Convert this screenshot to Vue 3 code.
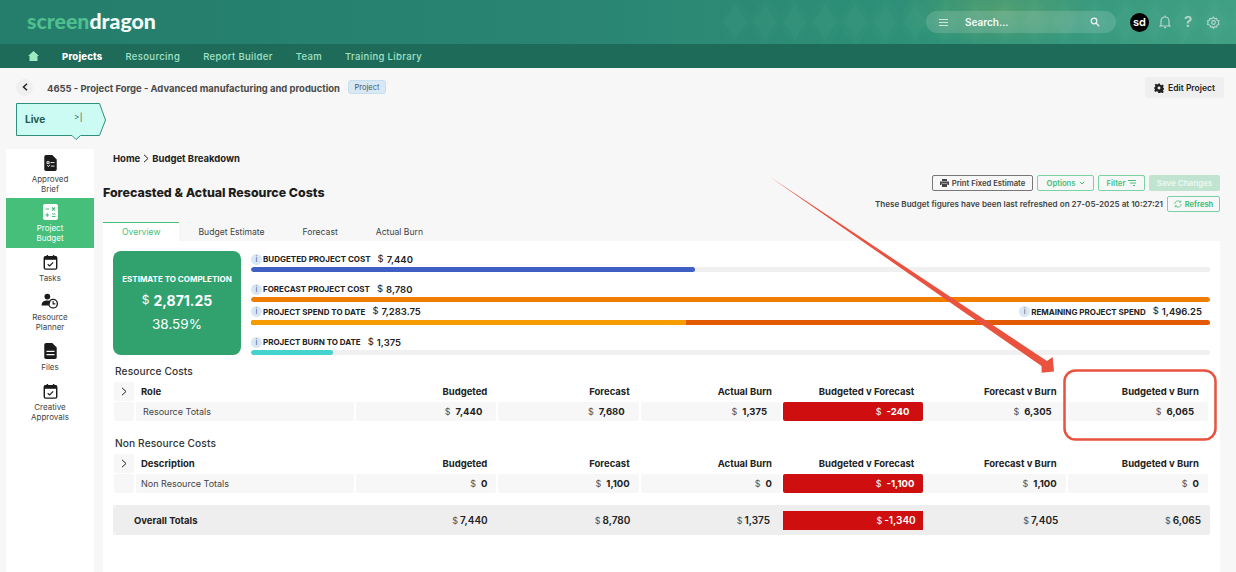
<script setup>
const sideItems = [
  { key: 'brief', lines: ['Approved', 'Brief'] },
  { key: 'calc', lines: ['Project', 'Budget'], active: true },
  { key: 'cal', lines: ['Tasks'] },
  { key: 'planner', lines: ['Resource', 'Planner'] },
  { key: 'file', lines: ['Files'] },
  { key: 'cal', lines: ['Creative', 'Approvals'] }
]
const navItems = ['Projects', 'Resourcing', 'Report Builder', 'Team', 'Training Library']
const tabs = ['Overview', 'Budget Estimate', 'Forecast', 'Actual Burn']
const heads = ['Budgeted', 'Forecast', 'Actual Burn', 'Budgeted v Forecast', 'Forecast v Burn', 'Budgeted v Burn']
const resourceVals = ['7,440', '7,680', '1,375', '-240', '6,305', '6,065']
const nonResourceVals = ['0', '1,100', '0', '-1,100', '1,100', '0']
const overallVals = ['7,440', '8,780', '1,375', '-1,340', '7,405', '6,065']
const sections = [
  { title: 'Resource Costs', first: 'Role', name: 'Resource Totals', vals: resourceVals, cls: 'loose' },
  { title: 'Non Resource Costs', first: 'Description', name: 'Non Resource Totals', vals: nonResourceVals, cls: 'tight' }
]
</script>

<template>
  <div class="page">
    <header class="topbar">
      <svg class="pattern" width="516" height="44" viewBox="0 0 516 44">
        <defs>
          <pattern id="lens" width="30" height="44" patternUnits="userSpaceOnUse">
            <path d="M15 4Q20 14 27 22 20 30 15 40 10 30 3 22 10 14 15 4z" fill="#fff" fill-opacity=".022"/>
            <path d="M0 -18Q5 -8 12 0 5 8 0 18-5 8-12 0-5-8 0-18zM30 -18Q35 -8 42 0 35 8 30 18 25 8 18 0 25-8 30-18zM0 26Q5 36 12 44 5 52 0 62-5 52-12 44-5 36 0 26zM30 26Q35 36 42 44 35 52 30 62 25 52 18 44 25 36 30 26z" fill="#000" fill-opacity=".012"/>
          </pattern>
        </defs>
        <rect width="516" height="44" fill="url(#lens)"/>
      </svg>
      <div class="logo"><span class="logo-a">screen</span><span class="logo-b">dragon</span></div>
      <div class="top-right">
        <div class="search">
          <svg class="s-menu" width="9" height="7" viewBox="0 0 9 7"><path d="M0 .5h9M0 3.5h9M0 6.500h9" stroke="#cfe6dd" stroke-width="1"/></svg>
          <span class="s-text">Search...</span>
          <svg width="10" height="10" viewBox="0 0 10 10" fill="none" stroke="#e8f4ef" stroke-width="1.3"><circle cx="4" cy="4" r="2.8"/><path d="M6 6l3.2 3.2"/></svg>
        </div>
        <div class="avatar">sd</div>
        <svg class="t-bell" width="12" height="14" viewBox="0 0 12 14" fill="none" stroke="#b9d8cd" stroke-width="1.2"><path d="M2 10V6a4 4 0 0 1 8 0v4l1 1H1z"/><path d="M5 12.600h2" /><path d="M6 .6v1.200"/></svg>
        <span class="t-q">?</span>
        <svg class="t-gear" width="13" height="13" viewBox="0 0 24 24" fill="none" stroke="#b9d8cd" stroke-width="2"><circle cx="12" cy="12" r="3.4"/><path d="M12 2l2 3 3.600-.6 1 3.400 3.400 1.200-1 3.400 1 3.200-3.400 1.200-1 3.400-3.600-.6-2 3-2-3-3.600.6-1-3.400L1 15.600l1-3.200-1-3.400 3.400-1.200 1-3.400L9 5z"/></svg>
      </div>
    </header>

    <nav class="navbar">
      <svg class="home" width="11" height="10" viewBox="0 0 11 10" fill="#9fe8c4"><path d="M5.500 0L11 5H9.500v5h-8V5H0z"/></svg>
      <a v-for="(n, i) in navItems" :key="n" class="nav-link" :class="{ on: i === 0 }">{{ n }}</a>
    </nav>

    <div class="project-row">
      <button class="back">
        <svg width="6" height="8" viewBox="0 0 6 8" fill="none" stroke="#222" stroke-width="1.5"><path d="M5 .8L1.500 4 5 7.200"/></svg>
      </button>
      <span class="project-title">4655 - Project Forge - Advanced manufacturing and production</span>
      <span class="chip">Project</span>
      <button class="edit">
        <svg width="10" height="10" viewBox="0 0 24 24" fill="#222"><path fill-rule="evenodd" d="M10 1h4l1 3.400 2.600 1 3-1.800 2.800 2.800-1.800 3 1 2.600 3.400 1v2l-3.400 1-1 2.600 1.800 3-2.800 2.800-3-1.800-2.600 1L14 24h-4l-1-3.400-2.600-1-3 1.800-2.800-2.800 1.800-3-1-2.600L-1 13v-2l3.400-1 1-2.600-1.800-3 2.800-2.800 3 1.800 2.600-1zM12 8.500a3.500 3.500 0 1 0 0 7 3.500 3.500 0 0 0 0-7z"/></svg>
        Edit Project
      </button>
    </div>

    <div class="live">
      <svg class="live-shape" width="92" height="38" viewBox="0 0 92 38">
        <path d="M.5 .5H83.500L89.500 17 83.500 32.500H64.500L60 36.500 56 32.500H.5z" fill="#ccfbf3" stroke="#2f8f7c" stroke-width="1"/>
      </svg>
      <span class="live-text">Live</span>
      <span class="live-end">&gt;|</span>
    </div>

    <div class="body">
      <aside class="sidebar">
        <div v-for="(s, i) in sideItems" :key="i" class="side-item" :class="{ active: s.active }">
          <svg v-if="s.key === 'brief'" width="13" height="16" viewBox="0 0 14 18"><path d="M2 0h7l5 5v11a2 2 0 0 1-2 2H2a2 2 0 0 1-2-2V2a2 2 0 0 1 2-2z" fill="#1b1b1b"/><path d="M3 7.500h2.500v2H3zM7 8.500h4.500M3 12h1l.8 1 1.500-2M7.500 12.500h4" stroke="#fff" stroke-width="1" fill="none"/></svg>
          <svg v-else-if="s.key === 'calc'" width="15" height="16" viewBox="0 0 15 16"><rect width="15" height="16" rx="2" fill="#fff"/><path d="M2.500 5h3.500M9 3.500l3 3M12 3.500l-3 3M2.500 11h3.500M4.250 9.250v3.500M9 10h3.500M9 12.500h3.500" stroke="#45bf7a" stroke-width="1.200"/></svg>
          <svg v-else-if="s.key === 'cal'" width="15" height="16" viewBox="0 0 16 18" fill="none"><rect x="1" y="3" width="14" height="14" rx="1.500" stroke="#1b1b1b" stroke-width="1.600"/><path d="M1 3h14v3.500H1z" fill="#1b1b1b"/><path d="M4.500 1v3M11.500 1v3" stroke="#1b1b1b" stroke-width="1.600"/><path d="M4.800 11.500l2.200 2 4-4" stroke="#1b1b1b" stroke-width="1.300"/></svg>
          <svg v-else-if="s.key === 'planner'" width="18" height="16" viewBox="0 0 19 18" fill="none"><circle cx="6.500" cy="4" r="3.200" fill="#1b1b1b"/><path d="M0 14c0-4 3-5.500 6.500-5.500 1.500 0 2.800.3 3.800.8L8 14z" fill="#1b1b1b"/><circle cx="13" cy="12" r="4.800" stroke="#1b1b1b" stroke-width="1.500"/><path d="M13 9v3.200h2.500" stroke="#1b1b1b" stroke-width="1.200"/></svg>
          <svg v-else width="13" height="16" viewBox="0 0 14 18"><path d="M2 0h7l5 5v11a2 2 0 0 1-2 2H2a2 2 0 0 1-2-2V2a2 2 0 0 1 2-2z" fill="#1b1b1b"/><path d="M2.500 9.500h9M2.500 13h9" stroke="#fff" stroke-width="1.500"/></svg>
          <div class="side-label"><div v-for="l in s.lines" :key="l">{{ l }}</div></div>
        </div>
      </aside>

      <main class="main">
        <div class="crumbs">Home <svg width="6" height="9" viewBox="0 0 6 9" fill="none" stroke="#222" stroke-width="1"><path d="M1 .8L5 4.500 1 8.200"/></svg> Budget Breakdown</div>

        <div class="title-row">
          <h1 class="title">Forecasted &amp; Actual Resource Costs</h1>
          <div class="title-actions">
            <div class="btn-row">
              <button class="btn dark">
                <svg width="9" height="8" viewBox="0 0 9 8" fill="#444"><path d="M2 0h5v2H2zM0 2.500h9V6H7.500V4.500h-6V6H0zM2 5h5v3H2z"/></svg>
                Print Fixed Estimate
              </button>
              <button class="btn green">Options <svg width="6" height="4" viewBox="0 0 6 4" fill="none" stroke="#45bf7a" stroke-width="1"><path d="M.8.800L3 3 5.200.8"/></svg></button>
              <button class="btn green">Filter <svg width="8" height="6" viewBox="0 0 8 6" fill="none" stroke="#45bf7a" stroke-width="1"><path d="M0 .5h8M2 3h6M5 5.500h2"/></svg></button>
              <button class="btn save">Save Changes</button>
            </div>
            <div class="refresh-row">
              <span>These Budget figures have been last refreshed on 27-05-2025 at 10:27:21</span>
              <button class="btn green refresh">
                <svg width="8" height="8" viewBox="0 0 10 10" fill="none" stroke="#45bf7a" stroke-width="1"><path d="M1 5a4 4 0 0 1 7-2.600M9 5a4 4 0 0 1-7 2.600"/><path d="M8.500 .8v2H6.500M1.500 9.200v-2h2"/></svg>
                Refresh
              </button>
            </div>
          </div>
        </div>

        <div class="tabs">
          <div v-for="(t, i) in tabs" :key="t" class="tab" :class="{ on: i === 0 }">{{ t }}</div>
        </div>

        <section class="panel">
          <div class="summary">
            <div class="etc">
              <div class="etc-label">ESTIMATE TO COMPLETION</div>
              <div class="etc-val"><span class="etc-cur">$</span>2,871.25</div>
              <div class="etc-pct">38.59%</div>
            </div>
            <div class="bars">
              <div class="bar-group">
                <div class="metric"><span class="info">i</span><b>BUDGETED PROJECT COST</b><span class="cur">$</span><span class="amt">7,440</span></div>
                <div class="track"><div class="fill blue"></div></div>
              </div>
              <div class="bar-group g2">
                <div class="metric"><span class="info">i</span><b>FORECAST PROJECT COST</b><span class="cur">$</span><span class="amt">8,780</span></div>
                <div class="track"><div class="fill orange"></div></div>
              </div>
              <div class="bar-group g3">
                <div class="metric split">
                  <div class="metric-side"><span class="info">i</span><b>PROJECT SPEND TO DATE</b><span class="cur">$</span><span class="amt">7,283.75</span></div>
                  <div class="metric-side"><span class="info">i</span><b>REMAINING PROJECT SPEND</b><span class="cur">$</span><span class="amt">1,496.25</span></div>
                </div>
                <div class="track spend"><div class="fill amber"></div></div>
              </div>
              <div class="bar-group g2">
                <div class="metric"><span class="info">i</span><b>PROJECT BURN TO DATE</b><span class="cur">$</span><span class="amt">1,375</span></div>
                <div class="track"><div class="fill teal"></div></div>
              </div>
            </div>
          </div>

          <div v-for="sec in sections" :key="sec.title" class="section" :class="sec.cls">
            <div class="sec-title">{{ sec.title }}</div>
            <div class="grid head">
              <div class="cell arrow-cell">
                <svg width="6" height="9" viewBox="0 0 6 9" fill="none" stroke="#222" stroke-width="1"><path d="M1 .8L5 4.500 1 8.200"/></svg>
              </div>
              <div class="head-name">{{ sec.first }}</div>
              <div v-for="h in heads" :key="h" class="head-col">{{ h }}</div>
            </div>
            <div class="grid rowvals">
              <div class="cell"></div>
              <div class="cell name">{{ sec.name }}</div>
              <div v-for="(v, i) in sec.vals" :key="i" class="cell val" :class="{ neg: i === 3 }"><span class="cur-s">$</span><b>{{ v }}</b></div>
            </div>
          </div>

          <div class="overall">
            <div class="ov-name">Overall Totals</div>
            <div v-for="(v, i) in overallVals" :key="i" class="ov-val" :class="{ neg: i === 3 }"><span class="cur-s">$</span><b>{{ v }}</b></div>
          </div>
        </section>
      </main>
    </div>

    <svg class="annot" width="1236" height="572" viewBox="0 0 1236 572">
      <path d="M770 177L1047 361L1052.700 357L1054 371.500L1041.700 372.700L1041.500 366z" fill="#e8523f"/>
      <rect x="1064.500" y="370.500" width="151" height="69" rx="11" fill="none" stroke="#e8523f" stroke-width="2.500"/>
    </svg>
  </div>
</template>

<style>
html, body { margin: 0; background: #f7f7f7; overflow: hidden; }
</style>

<style scoped>
.page { position: relative; width: 1236px; height: 572px; overflow: hidden; background: #f7f7f7; font-family: Inter, "Liberation Sans", sans-serif; color: #222; font-size: 10px; display: flex; flex-direction: column; }
button { font-family: inherit; cursor: pointer; }

.topbar { position: relative; height: 44px; flex: none; display: flex; align-items: center; justify-content: space-between; padding: 0 15px 0 27px; box-sizing: border-box; background: radial-gradient(ellipse 100px 40px at 1000px 10px, rgba(150,180,90,.3), transparent), linear-gradient(90deg, #257d6b 0%, #298472 45%, #2f9379 75%, #41a285 100%); }
.pattern { position: absolute; left: 720px; top: 0; }
.logo { position: relative; font-family: Lato, Inter, sans-serif; font-size: 21.300px; font-weight: 900; line-height: 20px; margin-top: -2px; }
.logo-a { color: #4fbf90; }
.logo-b { color: #f3fbf7; }
.top-right { position: relative; display: flex; align-items: center; }
.search { width: 190px; height: 22px; box-sizing: border-box; display: flex; align-items: center; padding: 0 16px 0 13px; border-radius: 11px; background: rgba(255,255,255,.14); margin-right: 14px; }
.s-menu { margin-right: 17px; }
.s-text { flex: 1; color: #f4fbf8; font-weight: 600; font-size: 10px; }
.avatar { width: 19px; height: 19px; border-radius: 50%; background: #000; color: #fff; text-align: center; line-height: 18px; font-size: 11px; font-weight: 600; margin-right: 10px; }
.t-bell { margin-right: 13px; }
.t-q { color: #b9d8cd; font-size: 15px; font-weight: 600; width: 10px; margin-right: 13px; line-height: 16px; }
.t-gear { margin-right: 1px; }

.navbar { height: 24px; flex: none; background: #1f6b5a; display: flex; align-items: center; padding-left: 28px; }
.home { margin-right: 23px; }
.nav-link { color: #a2e2c6; font-size: 9.500px; font-weight: 500; letter-spacing: .35px; margin-right: 23px; }
.nav-link.on { color: #fff; font-weight: 800; letter-spacing: .2px; }

.project-row { height: 36px; flex: none; display: flex; align-items: center; padding: 2px 12px 0 16px; box-sizing: border-box; }
.back { width: 17px; height: 17px; border-radius: 50%; background: #efefef; border: 0; padding: 0; display: flex; align-items: center; justify-content: center; margin-right: 14px; }
.project-title { font-weight: 700; color: #4a4a4a; font-size: 9.450px; margin-top: 2px; }
.chip { margin-left: 8px; height: 14px; width: 38px; box-sizing: border-box; text-align: center; line-height: 13px; font-size: 7.500px; background: #d8e9f5; border: 1px solid #c7dfef; border-radius: 3px; color: #3f566b; }
.edit { margin-left: auto; height: 21px; width: 79px; border: 0; border-radius: 2px; background: #efefef; font-size: 8.500px; font-weight: 600; color: #222; padding: 2px 0 0; display: flex; align-items: center; justify-content: center; gap: 4px; }

.live { position: relative; height: 46px; flex: none; margin-left: 16px; margin-top: -1px; }
.live-shape { position: absolute; left: 0; top: 0; }
.live-text { position: absolute; left: 9px; top: 10px; font-weight: 700; font-size: 10px; color: #21594e; }
.live-end { position: absolute; left: 58px; top: 9px; font-size: 8px; letter-spacing: .5px; color: #21594e; }

.body { flex: 1; display: flex; padding-left: 6px; min-height: 0; }
.sidebar { width: 88px; flex: none; background: #fff; }
.side-item { display: flex; flex-direction: column; align-items: center; padding-top: 6px; padding-bottom: 4px; }
.side-item > svg { display: block; }
.side-item:nth-child(5) { margin-top: 1px; }
.side-item:nth-child(6) { margin-top: 1px; }
.side-label { margin-top: 3px; font-size: 8px; line-height: 10px; text-align: center; color: #444; }
.side-item.active { background: #45bf7a; padding-bottom: 5px; }
.side-item.active .side-label { color: #fff; }

.main { width: 1117px; margin-left: 9px; flex: none; display: flex; flex-direction: column; }
.crumbs { padding: 3px 0 0 10px; height: 13px; font-weight: 700; font-size: 9.500px; line-height: 13px; color: #222; display: flex; align-items: center; gap: 3px; }
.title-row { display: flex; justify-content: space-between; height: 57px; padding-top: 10px; box-sizing: border-box; flex: none; }
.title { margin: 11px 0 0; font-size: 12.400px; font-weight: 800; line-height: 14px; color: #1d1d1d; }
.title-actions { display: flex; flex-direction: column; align-items: flex-end; }
.btn-row { display: flex; gap: 4px; }
.btn { height: 16px; box-sizing: border-box; border-radius: 2px; font-size: 7.700px; font-weight: 600; background: transparent; padding: 0; display: flex; align-items: center; justify-content: center; gap: 3px; }
.btn.dark { width: 101px; border: 1px solid #777; color: #444; }
.btn.green { border: 1px solid #7ad3a2; color: #45bf7a; }
.btn-row .btn.green:nth-child(2) { width: 57px; }
.btn-row .btn.green:nth-child(3) { width: 47px; }
.btn.save { width: 71px; border: 0; background: #c0e4d0; color: #eef8f2; font-size: 8px; }
.refresh-row { display: flex; align-items: center; gap: 4px; margin-top: 5px; font-size: 8.100px; font-weight: 600; color: #444; }
.btn.refresh { width: 53px; font-size: 7.500px; font-weight: 700; }

.tabs { display: flex; height: 19px; flex: none; }
.tab { padding: 0 19px; line-height: 21px; font-size: 8.600px; color: #444; box-sizing: border-box; }
.tab.on { background: #fff; color: #45bf7a; border-top: 1px solid #45bf7a; line-height: 19px; }

.panel { flex: 1; background: #fff; padding: 10px 10px 0; box-sizing: border-box; }
.summary { display: flex; gap: 10px; height: 104px; }
.etc { width: 128px; flex: none; border-radius: 8px; background: #31a26e; color: #fff; text-align: center; box-sizing: border-box; padding-top: 23px; }
.etc-label { font-size: 8px; font-weight: 700; line-height: 10px; }
.etc-val { font-size: 14px; font-weight: 700; line-height: 20px; margin-top: 7px; display: flex; justify-content: center; align-items: center; gap: 4px; }
.etc-cur { font-size: 12px; font-weight: 400; margin-top: -3px; }
.etc-pct { font-size: 13.500px; line-height: 18px; margin-top: 4px; }
.bars { flex: 1; min-width: 0; }
.metric { height: 16px; display: flex; align-items: center; }
.metric.split { height: 17px; justify-content: space-between; padding-right: 8px; }
.metric-side { display: flex; align-items: center; }
.metric b { font-size: 8px; font-weight: 700; color: #222; }
.info { width: 11px; height: 11px; border-radius: 50%; background: #d7e8f4; color: #4a6b85; font-size: 8px; line-height: 11px; text-align: center; margin-right: 1px; }
.cur { font-size: 9.500px; margin: -2px 3px 0 7px; color: #222; }
.amt { font-size: 9.500px; font-weight: 600; color: #222; }
.track { height: 5px; border-radius: 3px; background: #f0f0f0; overflow: hidden; }
.fill { height: 100%; border-radius: 3px; }
.blue { width: 444px; background: #3f5fc4; }
.orange { width: 100%; background: #f07d00; }
.amber { width: 435px; background: #f59c00; border-radius: 0; }
.teal { width: 82px; background: #45d3d0; }
.spend { background: #e35a05; }
.g2 { margin-top: 9px; }
.g3 { margin-top: 1px; }

.section { margin-top: 9px; padding-left: 1px; width: 1094px; }
.section + .section { margin-top: 15px; }
.sec-title { font-size: 10.200px; line-height: 14px; color: #333; padding-left: 1px; font-weight: 500; letter-spacing: .1px; }
.grid { display: grid; grid-template-columns: 20px 218px repeat(6, 1fr); column-gap: 2px; }
.head { height: 20px; margin-top: 3px; align-items: center; }
.arrow-cell { height: 20px; display: flex; align-items: center; justify-content: center; }
.cell { background: #f7f7f7; border-radius: 2px; height: 19px; font-size: 9px; line-height: 19px; }
.head-name { font-weight: 700; font-size: 9.500px; padding-left: 5px; color: #222; }
.head-col { text-align: right; padding-right: 9px; font-weight: 700; font-size: 9.500px; color: #222; }
.rowvals { margin-top: 1px; }
.name { color: #444; }
.loose .name { padding-left: 7px; }
.tight .name { padding-left: 5px; }
.val { text-align: right; color: #222; }
.loose .val { padding-right: 14px; }
.tight .val { padding-right: 9px; }
.cur-s { font-size: 9px; color: #555; margin-right: 5px; }
.val b { font-weight: 700; font-size: 9.500px; }
.neg { background: #cf0f0f !important; color: #fff; }
.neg .cur-s { color: #fff; }

.overall { margin-top: 12px; height: 30px; width: 1097px; background: #eeeeee; border-radius: 2px; display: grid; grid-template-columns: 241px repeat(6, 1fr); column-gap: 2px; align-items: center; }
.ov-name { padding-left: 21px; font-weight: 700; font-size: 9.500px; color: #222; }
.ov-val { text-align: right; padding-right: 9px; font-size: 10px; height: 19px; line-height: 19px; }
.ov-val:nth-child(4) { padding-right: 12px; }
.ov-val.neg { margin: 1px 2px 0 -1px; padding-right: 7px; }
.ov-val .cur-s { margin-right: 2px; }
.ov-val b { font-weight: 600; font-size: 10px; }

.annot { position: absolute; left: 0; top: 0; pointer-events: none; }
</style>
